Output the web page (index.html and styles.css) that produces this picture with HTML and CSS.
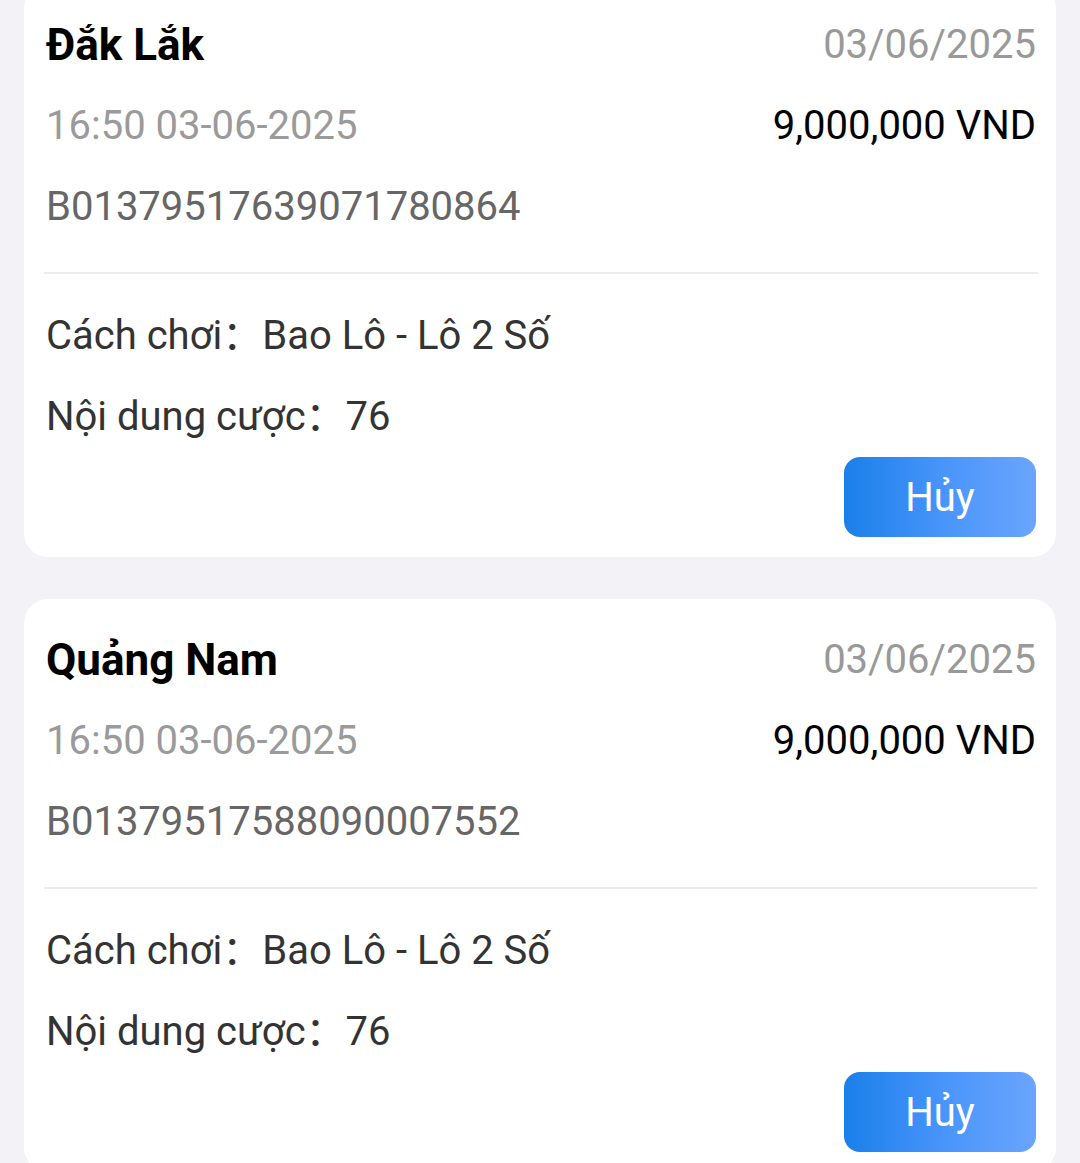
FILE: index.html
```html
<!DOCTYPE html>
<html lang="vi">
<head>
    <meta charset="UTF-8">
    <meta name="viewport" content="width=device-width, initial-scale=1.0">
    <title>Lịch sử cược</title>
    <link rel="stylesheet" href="styles.css">
</head>
<body>
    <div class="list">
        <div class="card">
            <div class="row">
                <span class="region">Đắk Lắk</span>
                <span class="draw-date">03/06/2025</span>
            </div>
            <div class="row">
                <span class="time">16:50 03-06-2025</span>
                <span class="amount">9,000,000 VND</span>
            </div>
            <div class="row">
                <span class="code">B01379517639071780864</span>
            </div>
            <div class="divider"></div>
            <div class="detail">Cách chơi：Bao Lô - Lô 2 Số</div>
            <div class="detail">Nội dung cược：76</div>
            <div class="actions">
                <button class="cancel-btn">Hủy</button>
            </div>
        </div>

        <div class="card">
            <div class="row">
                <span class="region">Quảng Nam</span>
                <span class="draw-date">03/06/2025</span>
            </div>
            <div class="row">
                <span class="time">16:50 03-06-2025</span>
                <span class="amount">9,000,000 VND</span>
            </div>
            <div class="row">
                <span class="code">B01379517588090007552</span>
            </div>
            <div class="divider"></div>
            <div class="detail">Cách chơi：Bao Lô - Lô 2 Số</div>
            <div class="detail">Nội dung cược：76</div>
            <div class="actions">
                <button class="cancel-btn">Hủy</button>
            </div>
        </div>
    </div>
</body>
</html>
```

FILE: styles.css
```css
* {
    margin: 0;
    padding: 0;
    box-sizing: border-box;
}

body {
    font-family: Roboto, "Noto Sans CJK SC", sans-serif;
    background: #f2f2f7;
    overflow: hidden;
}

.list {
    display: flex;
    flex-direction: column;
    gap: 42px;
    padding: 0 24px;
    margin-top: -16px;
}

.card {
    background: #fff;
    border-radius: 24px;
    padding: 20px 20px 20px 22px;
}

.row {
    display: flex;
    justify-content: space-between;
    align-items: center;
    height: 81px;
    font-size: 40px;
}

.region {
    font-size: 44px;
    font-weight: bold;
    color: #000;
}

.draw-date {
    color: #999;
}

.time {
    color: #9a9a9a;
}

.amount {
    color: #000;
}

.code {
    color: #666;
}

.divider {
    height: 2px;
    background: #ececec;
    margin: 25px -2px 21px -2px;
}

.detail {
    height: 81px;
    line-height: 81px;
    font-size: 40px;
    color: #333;
}

.actions {
    display: flex;
    justify-content: flex-end;
}

.cancel-btn {
    width: 192px;
    height: 80px;
    border: none;
    border-radius: 16px;
    background: linear-gradient(90deg, #1a7fea, #4b96fb 55%, #6aa5fd);
    color: #fff;
    font-family: inherit;
    font-size: 40px;
}
```
